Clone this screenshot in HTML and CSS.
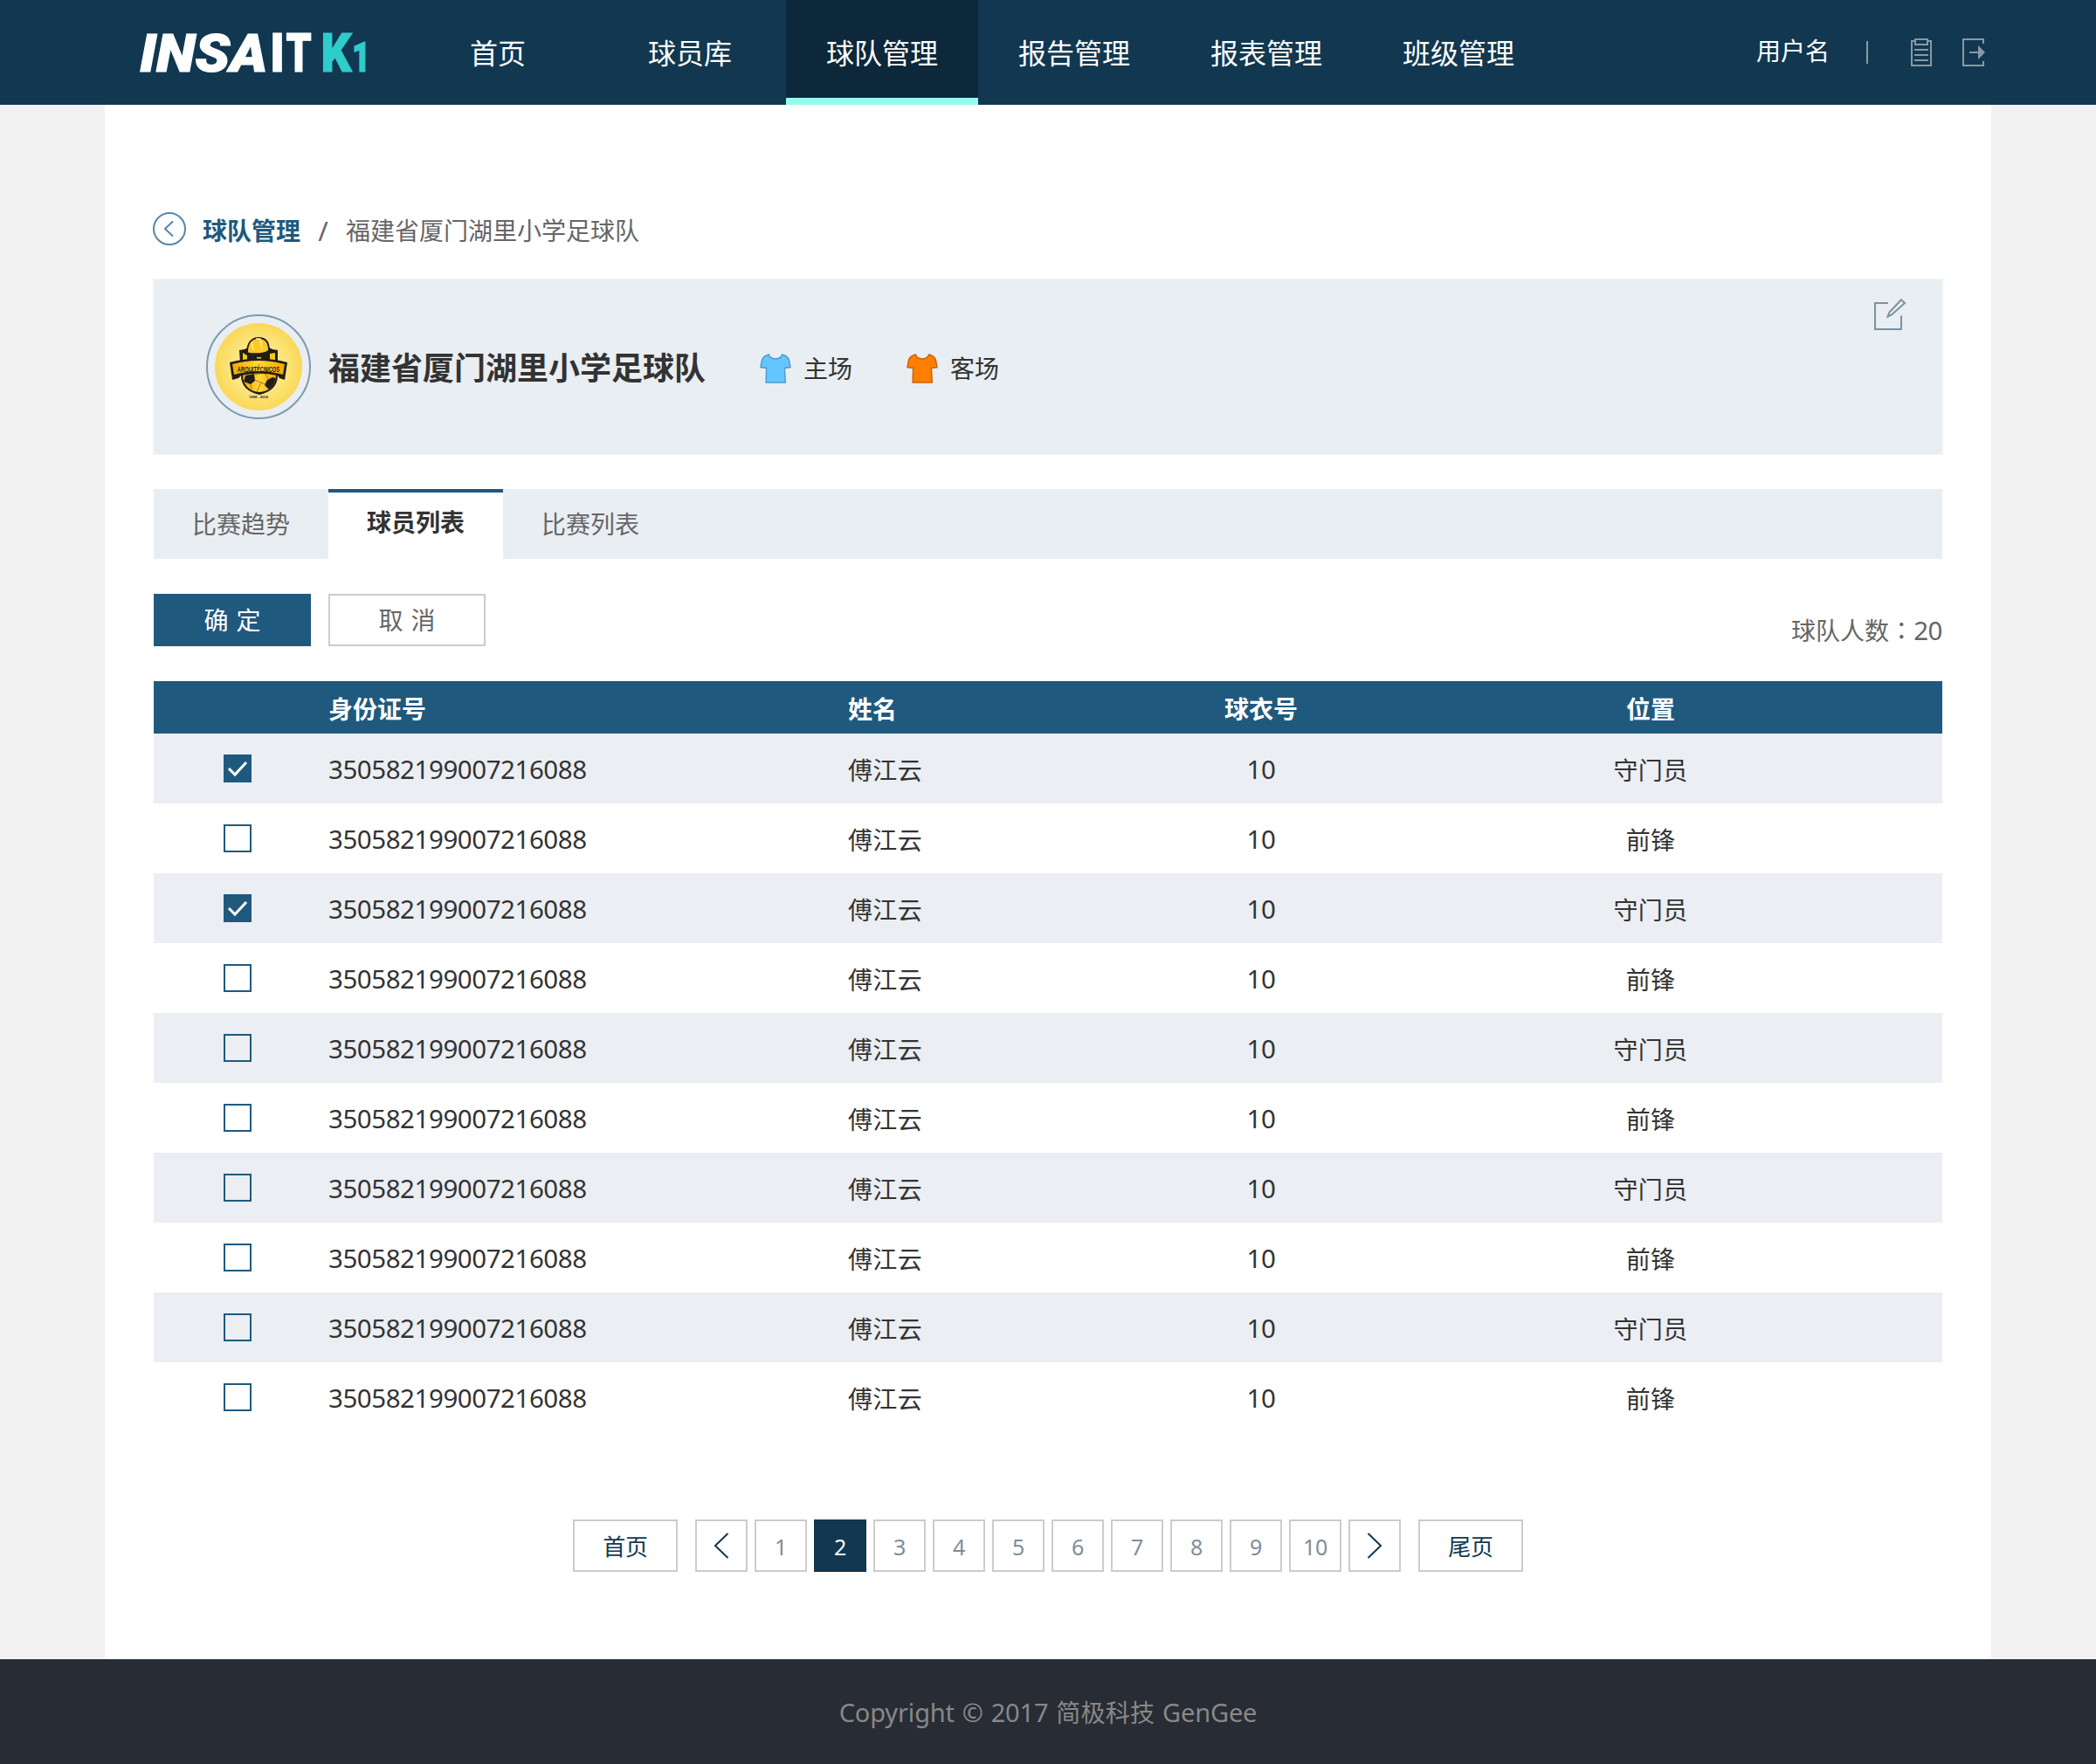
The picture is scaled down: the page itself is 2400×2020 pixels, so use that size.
FILE: index.html
```html
<!DOCTYPE html>
<html lang="zh-CN">
<head>
<meta charset="utf-8">
<title>INSAIT K1 球队管理</title>
<link rel="stylesheet" href="styles.css">
</head>
<body>
<svg class="defs" width="0" height="0">
  <symbol id="shirt" viewBox="0 0 38 34">
    <path d="M11 1 C6 2 3 4 2.300 9 L1 15.500 L8 16.500 L7.500 33 H31 L30 16.500 L37 15.500 L35.700 9 C35 4 32 2 27 1 C25 7.500 13 7.500 11 1 Z"/>
  </symbol>
</svg>
<header class="topbar">
  <a class="logo">
    <svg width="262" height="44" viewBox="0 0 262 44">
      <g class="logo-word">
        <text transform="translate(0 44) scale(1.070 1)" class="slanted">INSA</text>
        <text transform="translate(157.500 44) scale(.9 1)" text-anchor="middle">I</text>
        <text transform="translate(182 44) scale(.76 1)" text-anchor="middle">T</text>
      </g>
      <g class="logo-mark">
        <text transform="translate(225 44) scale(.9 1)" text-anchor="middle">K</text>
        <text transform="translate(253.500 44) scale(.76 1)" class="digit" text-anchor="middle">1</text>
      </g>
    </svg>
  </a>
  <nav class="nav">
    <a>首页</a><a>球员库</a><a class="active">球队管理</a><a>报告管理</a><a>报表管理</a><a>班级管理</a>
  </nav>
  <div class="user">
    <span>用户名</span>
    <i class="sep"></i>
    <svg class="clip" width="24" height="32" viewBox="0 0 24 32"><path d="M4 3H1V31H23V3H20M5 1H19V7H5ZM4 13H20M4 19H20M4 25H20"/></svg>
    <svg width="26" height="32" viewBox="0 0 26 32"><path d="M24 6V1H1V31H24V26M8 16H19"/><path class="fill" d="M18 8L26 16L18 24Z"/></svg>
  </div>
</header>
<main class="page">
  <div class="crumbs">
    <svg width="38" height="38" viewBox="0 0 38 38"><circle cx="19" cy="19" r="18"/><path d="M23 10.500L14 19L23 27.500"/></svg>
    <b>球队管理</b><span class="slash">/</span><span>福建省厦门湖里小学足球队</span>
  </div>
  <section class="team">
    <div class="badge">
      <svg width="100" height="100" viewBox="0 0 100 100">
        <defs>
          <radialGradient id="disc"><stop offset="0" stop-color="#fff0a8"/><stop offset=".55" stop-color="#fde684"/><stop offset="1" stop-color="#fad856"/></radialGradient>
          <linearGradient id="gold" x1="0" x2="1"><stop offset="0" stop-color="#f5a800"/><stop offset=".5" stop-color="#ffd83a"/><stop offset="1" stop-color="#f3a600"/></linearGradient>
          <clipPath id="ball"><circle cx="51" cy="60" r="19"/></clipPath>
        </defs>
        <circle cx="50" cy="50" r="50" fill="url(#disc)"/>
        <path d="M28 31L34 30L38 28H62L66 30L72 31V60C72 72 64 79 51 82C38 79 30 72 30 60Z" fill="#201d1a"/>
        <path d="M32 34L37 37V46H32ZM48 39H53V46H48ZM63 35L69 34V46H63Z" fill="#fcc913"/>
        <circle cx="51" cy="60" r="19" fill="url(#gold)"/>
        <g clip-path="url(#ball)">
          <path d="M35 60L45 58L46 66L41 70L33 67ZM60 65L66 62L72 64L70 72L62 76L57 71Z" fill="#201d1a"/>
          <path d="M45 65L53 68L58 70M53 68L48 79M46 59L57 57L62 65M41 70L42 76" fill="none" stroke="#8d6400" stroke-width=".8"/>
        </g>
        <path d="M17 45Q50 36 83 45L80 65L74 63L72 60Q50 55 30 60L27 63L20 65Z" fill="#201d1a"/>
        <path d="M20 47Q50 39 80 47L78 59Q50 51 22 59Z" fill="url(#gold)"/>
        <text transform="translate(50 55.500) scale(.64 1)" text-anchor="middle" class="crest-name">ARQUITÉCNICOS</text>
        <path d="M37 34C37 23 42 17 50 17C58 17 62 22 62 31C58 36 44 36 37 34Z" fill="#ffc82a" stroke="#201d1a" stroke-width="1.800"/>
        <path d="M47 18L52 18L54 30M42 22L44 31" fill="none" stroke="#fff0a0" stroke-width="1.300"/>
        <text x="50" y="85.500" text-anchor="middle" class="crest-year">1998 - 2014</text>
      </svg>
    </div>
    <h1>福建省厦门湖里小学足球队</h1>
    <div class="kit home"><svg width="36" height="34" viewBox="0 0 38 34" preserveAspectRatio="none"><use href="#shirt" width="38" height="34"/></svg>主场</div>
    <div class="kit away"><svg width="36" height="34" viewBox="0 0 38 34" preserveAspectRatio="none"><use href="#shirt" width="38" height="34"/></svg>客场</div>
    <svg class="edit" width="38" height="36" viewBox="0 0 38 36"><path d="M16 5H1V35H31V19.500M31 1.200L35 5L20 18.500L15.500 20.500L17.500 15.500Z"/></svg>
  </section>
  <div class="tabs"><a>比赛趋势</a><a class="active">球员列表</a><a>比赛列表</a></div>
  <div class="actions">
    <button class="primary">确 定</button><button>取 消</button>
    <span class="count">球队人数<span class="colon" lang="zh-TW">：</span><span class="num">20</span></span>
  </div>
  <table class="players">
    <colgroup><col class="c-check"><col class="c-id"><col class="c-name"><col class="c-num"><col></colgroup>
    <thead><tr><th></th><th>身份证号</th><th>姓名</th><th class="mid">球衣号</th><th class="mid pos">位置</th></tr></thead>
    <tbody>
      <tr><td><i class="box on"><svg width="24" height="20" viewBox="0 0 24 20"><path d="M2 10L9 17L22 3"/></svg></i></td><td class="num">350582199007216088</td><td>傅江云</td><td class="mid num">10</td><td class="mid pos">守门员</td></tr>
      <tr><td><i class="box"></i></td><td class="num">350582199007216088</td><td>傅江云</td><td class="mid num">10</td><td class="mid pos">前锋</td></tr>
      <tr><td><i class="box on"><svg width="24" height="20" viewBox="0 0 24 20"><path d="M2 10L9 17L22 3"/></svg></i></td><td class="num">350582199007216088</td><td>傅江云</td><td class="mid num">10</td><td class="mid pos">守门员</td></tr>
      <tr><td><i class="box"></i></td><td class="num">350582199007216088</td><td>傅江云</td><td class="mid num">10</td><td class="mid pos">前锋</td></tr>
      <tr><td><i class="box"></i></td><td class="num">350582199007216088</td><td>傅江云</td><td class="mid num">10</td><td class="mid pos">守门员</td></tr>
      <tr><td><i class="box"></i></td><td class="num">350582199007216088</td><td>傅江云</td><td class="mid num">10</td><td class="mid pos">前锋</td></tr>
      <tr><td><i class="box"></i></td><td class="num">350582199007216088</td><td>傅江云</td><td class="mid num">10</td><td class="mid pos">守门员</td></tr>
      <tr><td><i class="box"></i></td><td class="num">350582199007216088</td><td>傅江云</td><td class="mid num">10</td><td class="mid pos">前锋</td></tr>
      <tr><td><i class="box"></i></td><td class="num">350582199007216088</td><td>傅江云</td><td class="mid num">10</td><td class="mid pos">守门员</td></tr>
      <tr><td><i class="box"></i></td><td class="num">350582199007216088</td><td>傅江云</td><td class="mid num">10</td><td class="mid pos">前锋</td></tr>
    </tbody>
  </table>
  <div class="pager">
    <a class="edge first">首页</a>
    <a><svg width="18" height="30" viewBox="0 0 18 30"><path d="M16.500 1L2 15L16.500 29"/></svg></a>
    <a>1</a><a class="current">2</a><a>3</a><a>4</a><a>5</a><a>6</a><a>7</a><a>8</a><a>9</a><a>10</a>
    <a><svg width="18" height="30" viewBox="0 0 18 30"><path d="M1.500 1L16 15L1.500 29"/></svg></a>
    <a class="edge last">尾页</a>
  </div>
</main>
<footer class="footer">Copyright © 2017 <span>简极科技</span> GenGee</footer>
</body>
</html>
```
FILE: styles.css
```css
* { box-sizing: border-box; }
body {
  margin: 0;
  width: 2400px;
  background: #f1f1f1;
  color: #333;
  font: 28px/40px "Noto Sans", "Noto Sans CJK SC", sans-serif;
}
.defs { position: absolute; }
svg { display: block; flex: none; }

.topbar { display: flex; height: 120px; background: #113850; color: #fff; }
.logo { width: 300px; margin-left: 160px; padding-top: 38px; }
.logo svg { overflow: visible; }
.logo text { font: 900 61px Roboto, sans-serif; stroke-width: 1.200; }
.logo .slanted { font-style: italic; }
.logo .digit { font-size: 48px; }
.logo-word { fill: #fff; stroke: #fff; }
.logo-mark { fill: #2fcccb; stroke: #2fcccb; }
.nav { display: flex; font-size: 32px; }
.nav a { width: 220px; height: 120px; line-height: 122px; text-align: center; }
.nav .active { background: #0c283a; border-bottom: 8px solid #98fbee; }
.user { display: flex; align-items: center; margin-left: 231px; }
.user span { padding-bottom: 4px; }
.user .sep { width: 2px; height: 26px; margin: 0 49px 0 42px; background: #8899a6; }
.user path { fill: none; stroke: #8899a6; stroke-width: 2; }
.user .clip { margin-right: 35px; }
.user .fill { fill: #8899a6; stroke: none; }

.page { width: 2160px; height: 1780px; margin: 0 auto; padding: 122px 56px 0; background: #fff; }
.crumbs { display: flex; align-items: center; height: 40px; margin-left: -1px; color: #666; }
.crumbs circle, .crumbs path { fill: none; stroke: #5587a6; stroke-width: 2; }
.crumbs b, .crumbs span { padding-top: 3px; }
.crumbs b { margin-left: 19px; color: #20597e; }
.crumbs .slash { width: 12px; margin: 0 20px; font-size: 31px; text-align: center; }

.team {
  display: flex;
  align-items: flex-start;
  height: 200px;
  margin-top: 38px;
  padding: 40px 0 0 60px;
  background: #e9eef2;
  box-shadow: 0 0 0 1px #f2f5f7;
}
.badge { width: 120px; height: 120px; padding: 8px; border: 2px solid #7b9bb0; border-radius: 50%; }
.crest-name { font: bold 9px "Liberation Sans", sans-serif; fill: #201d1a; }
.crest-year { font: bold 4px "Liberation Sans", sans-serif; fill: #201d1a; }
.team h1 { margin: 42px 62px 0 20px; font-size: 36px; line-height: 40px; }
.kit { display: flex; align-items: center; gap: 14px; height: 40px; margin: 42px 62px 0 0; }
.kit svg { stroke-width: 1.500; }
.home svg { fill: #63c6ff; stroke: #4a9dce; }
.away svg { fill: #ff7e00; stroke: #c96502; }
.edit { margin: -18px 40px 0 auto; }
.edit path { fill: none; stroke: #7b92a0; stroke-width: 2; }

.tabs { display: flex; height: 80px; margin-top: 40px; background: #e9eef2; color: #666; }
.tabs a { width: 200px; line-height: 80px; text-align: center; }
.tabs .active { border-top: 4px solid #20597e; background: #fff; color: #333; font-weight: bold; line-height: 69px; }

.actions { display: flex; gap: 20px; height: 60px; margin: 40px 0; color: #666; }
.actions button { width: 180px; padding: 0; border: 2px solid #ccc; background: #fff; color: #666; font: inherit; word-spacing: 1.500px; }
.actions .primary { border-color: #20597e; background: #20597e; color: #fff; }
.count { margin: 22px 0 0 auto; }
.colon { font-family: "Noto Sans CJK TC", sans-serif; line-height: 1; }

.players { width: 2048px; table-layout: fixed; border-collapse: collapse; }
.c-check { width: 200px; }
.c-id { width: 595px; }
.c-name { width: 246px; }
.c-num { width: 454px; }
.players th { height: 60px; padding: 4px 0 0; background: #20597e; color: #fff; text-align: left; }
.players td { height: 80px; padding: 3px 0 0; letter-spacing: .37px; }
.num, .players .num { font-size: 29.500px; letter-spacing: -.45px; }
.players .num { padding-top: 1px; }
.players tbody tr:nth-child(odd) { background: #ebeef2; }
.players .mid { text-align: center; }
.players .pos { padding-right: 115px; }
.players td:first-child { padding: 0 0 0 80px; }
.box { display: flex; align-items: center; justify-content: center; width: 32px; height: 32px; border: 2px solid #20597e; }
.box.on { background: #20597e; }
.box path { fill: none; stroke: #fff; stroke-width: 3; }

.pager { display: flex; justify-content: center; gap: 8px; margin-top: 100px; color: #7d8e9b; font-size: 25px; letter-spacing: -.3px; }
.pager a { display: flex; align-items: center; justify-content: center; width: 60px; height: 60px; padding-top: 1px; border: 2px solid #ccc; }
.pager .edge { width: 120px; padding-top: 2px; color: #113850; font-size: 26px; }
.pager .first { margin-right: 12px; }
.pager .last { margin-left: 12px; }
.pager .current { border-color: #113850; background: #113850; color: #fff; }
.pager svg { margin-top: -1px; }
.pager path { fill: none; stroke: #113850; stroke-width: 2; }

.footer { height: 120px; background: #282c34; color: #888; font-size: 29px; line-height: 122px; text-align: center; letter-spacing: -.15px; word-spacing: 1.500px; }
.footer span { font-size: 28px; letter-spacing: .2px; }
```
